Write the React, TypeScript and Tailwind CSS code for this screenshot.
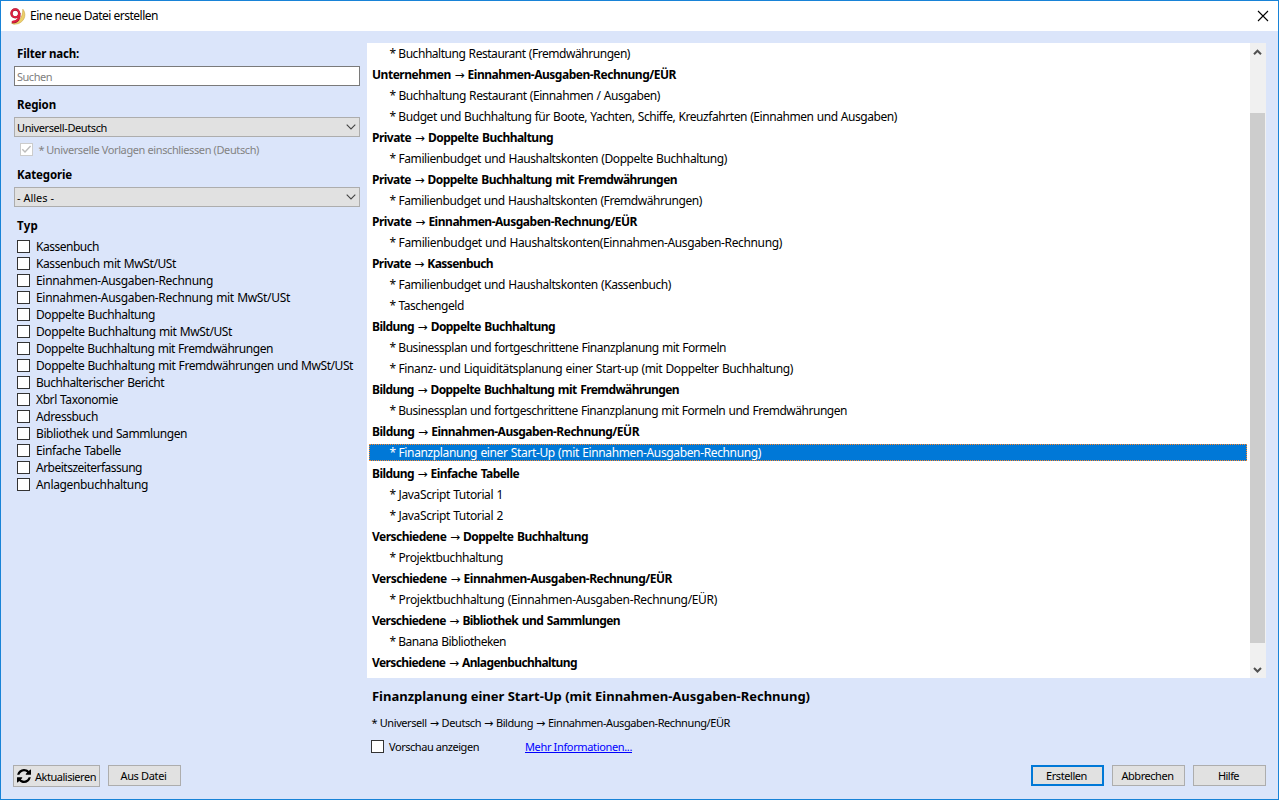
import React from "react";

type Row = { text: string; width: number; kind: "group" | "item" | "selected" };

const rows: Row[] = [
  { kind: "item", text: "* Buchhaltung Restaurant (Fremdwährungen)", width: 240 },
  { kind: "group", text: "Unternehmen → Einnahmen-Ausgaben-Rechnung/EÜR", width: 304 },
  { kind: "item", text: "* Buchhaltung Restaurant (Einnahmen / Ausgaben)", width: 270 },
  { kind: "item", text: "* Budget und Buchhaltung für Boote, Yachten, Schiffe, Kreuzfahrten (Einnahmen und Ausgaben)", width: 507 },
  { kind: "group", text: "Private → Doppelte Buchhaltung", width: 181 },
  { kind: "item", text: "* Familienbudget und Haushaltskonten (Doppelte Buchhaltung)", width: 337 },
  { kind: "group", text: "Private → Doppelte Buchhaltung mit Fremdwährungen", width: 305 },
  { kind: "item", text: "* Familienbudget und Haushaltskonten (Fremdwährungen)", width: 312 },
  { kind: "group", text: "Private → Einnahmen-Ausgaben-Rechnung/EÜR", width: 265 },
  { kind: "item", text: "* Familienbudget und Haushaltskonten(Einnahmen-Ausgaben-Rechnung)", width: 392 },
  { kind: "group", text: "Private → Kassenbuch", width: 121 },
  { kind: "item", text: "* Familienbudget und Haushaltskonten (Kassenbuch)", width: 281 },
  { kind: "item", text: "* Taschengeld", width: 74 },
  { kind: "group", text: "Bildung → Doppelte Buchhaltung", width: 183 },
  { kind: "item", text: "* Businessplan und fortgeschrittene Finanzplanung mit Formeln", width: 336 },
  { kind: "item", text: "* Finanz- und Liquiditätsplanung einer Start-up (mit Doppelter Buchhaltung)", width: 403 },
  { kind: "group", text: "Bildung → Doppelte Buchhaltung mit Fremdwährungen", width: 307 },
  { kind: "item", text: "* Businessplan und fortgeschrittene Finanzplanung mit Formeln und Fremdwährungen", width: 457 },
  { kind: "group", text: "Bildung → Einnahmen-Ausgaben-Rechnung/EÜR", width: 267 },
  { kind: "selected", text: "* Finanzplanung einer Start-Up (mit Einnahmen-Ausgaben-Rechnung)", width: 371 },
  { kind: "group", text: "Bildung → Einfache Tabelle", width: 147 },
  { kind: "item", text: "* JavaScript Tutorial 1", width: 113 },
  { kind: "item", text: "* JavaScript Tutorial 2", width: 113 },
  { kind: "group", text: "Verschiedene → Doppelte Buchhaltung", width: 216 },
  { kind: "item", text: "* Projektbuchhaltung", width: 113 },
  { kind: "group", text: "Verschiedene → Einnahmen-Ausgaben-Rechnung/EÜR", width: 300 },
  { kind: "item", text: "* Projektbuchhaltung (Einnahmen-Ausgaben-Rechnung/EÜR)", width: 327 },
  { kind: "group", text: "Verschiedene → Bibliothek und Sammlungen", width: 248 },
  { kind: "item", text: "* Banana Bibliotheken", width: 116 },
  { kind: "group", text: "Verschiedene → Anlagenbuchhaltung", width: 205 },
];

const types: [string, number][] = [
  ["Kassenbuch", 63],
  ["Kassenbuch mit MwSt/USt", 140],
  ["Einnahmen-Ausgaben-Rechnung", 177],
  ["Einnahmen-Ausgaben-Rechnung mit MwSt/USt", 254],
  ["Doppelte Buchhaltung", 119],
  ["Doppelte Buchhaltung mit MwSt/USt", 196],
  ["Doppelte Buchhaltung mit Fremdwährungen", 237],
  ["Doppelte Buchhaltung mit Fremdwährungen und MwSt/USt", 317],
  ["Buchhalterischer Bericht", 128],
  ["Xbrl Taxonomie", 82],
  ["Adressbuch", 62],
  ["Bibliothek und Sammlungen", 151],
  ["Einfache Tabelle", 85],
  ["Arbeitszeiterfassung", 106],
  ["Anlagenbuchhaltung", 112],
];

/* Tracks a single line of text so that it spans the given width. */
function Fit({ text, width, className = "" }: { text: string; width: number; className?: string }) {
  const ref = React.useRef<HTMLSpanElement>(null);
  const [spacing, setSpacing] = React.useState(0);
  React.useLayoutEffect(() => {
    const natural = ref.current!.getBoundingClientRect().width;
    setSpacing((width - natural) / text.length);
  }, [text, width]);
  return (
    <span ref={ref} className={`inline-block whitespace-pre ${className}`} style={{ letterSpacing: `${spacing}px` }}>
      {text.split(/(→|^\*)/).map((part, i) =>
        part === "→" ? (
          <span key={i} className="font-['DejaVu_Sans',sans-serif] font-normal leading-none">
            →
          </span>
        ) : part === "*" ? (
          <span key={i} className="-ml-[0.5px] -mr-[0.5px]">
            *
          </span>
        ) : (
          part
        ),
      )}
    </span>
  );
}

function Box() {
  return <span className="box-border h-[13px] w-[13px] shrink-0 border border-[#333] bg-white" />;
}

function Combo({ text, width }: { text: string; width: number }) {
  return (
    <div className="flex h-5 w-[346px] items-center justify-between border border-[#adadad] bg-[#e1e1e1] pl-[2px] pr-[3px]">
      <Fit text={text} width={width} className="pt-[2px] text-[11px] leading-[18px]" />
      <svg width="10" height="6" viewBox="0 0 10 6" fill="none" stroke="#444" strokeWidth="1.1">
        <path d="M0.7 0.7 5 5 9.3 0.7" />
      </svg>
    </div>
  );
}

function Button({ text, width, primary }: { text: string; width: number; primary?: boolean }) {
  return (
    <button
      className={`flex h-[21px] w-[73px] items-center justify-center bg-[#e1e1e1] pr-[2px] text-[11px] ${
        primary ? "border-2 border-[#0078d7]" : "border border-[#adadad]"
      }`}
    >
      <Fit text={text} width={width} className="pt-px" />
    </button>
  );
}

export default function App() {
  return (
    <div className="flex h-[800px] w-[1279px] flex-col border border-[#1883d7] bg-[#dbe5fa] font-['Noto_Sans','Open_Sans',sans-serif] text-[12px] text-black">
      <header className="flex h-[30px] shrink-0 items-center bg-white pl-2 pr-[9px]">
        <svg width="17" height="17" viewBox="0 0 17 17" fill="none" className="mr-1">
          <path d="M13.8 1.2C17.2 5 16.8 12.500 9.500 15.600L5 16.300 2.600 15.200C9.500 15 14 9.500 13.800 1.200Z" fill="#edd06a" stroke="#c9a240" strokeWidth=".6" />
          <ellipse cx="6.3" cy="5.4" rx="3.8" ry="3.9" fill="#fff" stroke="#8d1230" strokeWidth="2.3" />
          <path d="M10.300 5C11 10.500 9 14.300 2.800 14.200" stroke="#8d1230" strokeWidth="2.3" />
          <ellipse cx="6.3" cy="5.300" rx="3.900" ry="3.900" stroke="#e01f3f" strokeWidth="1.8" />
          <path d="M10.400 5C11 10.200 8.800 13.700 3 13.900" stroke="#e01f3f" strokeWidth="1.8" />
        </svg>
        <Fit text="Eine neue Datei erstellen" width={128} className="leading-[30px]" />
        <svg className="ml-auto" width="12" height="12" viewBox="0 0 12 12" stroke="#000" strokeWidth="1.1">
          <path d="m1 1 10 10M11 1 1 11" />
        </svg>
      </header>
      <div className="flex h-[647px] shrink-0">
        <aside className="flex w-[366px] shrink-0 flex-col pl-[13px] pt-[15px]">
          <Fit text="Filter nach:" width={62} className="ml-[3px] h-4 self-start text-[11.5px] font-bold leading-4" />
          <div className="mt-1 flex h-5 w-[346px] items-center border border-[#7a7a7a] bg-white pl-[2px] text-[11px] text-[#808080]">
            <Fit text="Suchen" width={35} className="pt-[2px]" />
          </div>
          <Fit text="Region" width={39} className="ml-[3px] mt-[11px] h-4 self-start text-[11.5px] font-bold leading-4" />
          <div className="mt-1">
            <Combo text="Universell-Deutsch" width={90} />
          </div>
          <div className="ml-[6px] mt-[6px] flex h-[13px] items-center text-[11px] text-[#838383]">
            <span className="mr-[6px] flex h-[13px] w-[13px] items-center justify-center border border-[#ccc] bg-white">
              <svg width="11" height="11" viewBox="0 0 11 11" fill="none" stroke="#bcbcbc" strokeWidth="1.4">
                <path d="m1.3 5.3 2.7 2.8 5.6-6" />
              </svg>
            </span>
            <Fit text="* Universelle Vorlagen einschliessen (Deutsch)" width={220} className="pt-[2px]" />
          </div>
          <Fit text="Kategorie" width={55} className="ml-[3px] mt-[11px] h-4 self-start text-[11.5px] font-bold leading-4" />
          <div className="mt-1">
            <Combo text="- Alles -" width={37} />
          </div>
          <Fit text="Typ" width={21} className="ml-[3px] mt-[11px] h-4 self-start text-[11.5px] font-bold leading-4" />
          <div className="ml-[3px] mt-1 flex flex-col">
            {types.map(([label, width]) => (
              <div key={label} className="flex h-[17px] items-center gap-[6px]">
                <Box />
                <Fit text={label} width={width} className="leading-[17px] [word-spacing:0.5px]" />
              </div>
            ))}
          </div>
        </aside>
        <main className="mt-3 flex h-[635px] w-[899px] bg-white">
          <div className="flex w-[883px] flex-col pl-[2px]">
            {rows.map((row) => (
              <div
                key={row.text}
                className={
                  row.kind === "group"
                    ? "flex h-[21px] items-center pl-[3px] font-bold [word-spacing:1px]"
                    : row.kind === "item"
                      ? "flex h-[21px] items-center pl-[21px] [word-spacing:0.5px]"
                      : "my-[2px] mr-[3px] flex h-[17px] items-center border border-dotted border-[#ff8728] bg-[#0078d7] pl-[20px] text-white [word-spacing:0.5px]"
                }
              >
                <Fit text={row.text} width={row.width} className="leading-[17px]" />
              </div>
            ))}
          </div>
          <div className="flex w-4 flex-col items-center bg-[#f0f0f0] pr-px">
            <svg width="15" height="17" viewBox="0 0 15 17" fill="none" stroke="#505050" strokeWidth="2">
              <path d="M4 11.2 7.5 7.7 11 11.2" />
            </svg>
            <div className="mt-[53px] h-[530px] w-[15px] bg-[#cdcdcd]" />
            <svg className="mt-auto" width="15" height="17" viewBox="0 0 15 17" fill="none" stroke="#505050" strokeWidth="2">
              <path d="M4 7 7.5 10.5 11 7" />
            </svg>
          </div>
        </main>
      </div>
      <section className="ml-[370px] flex flex-col">
        <Fit text="Finanzplanung einer Start-Up (mit Einnahmen-Ausgaben-Rechnung)" width={438} className="ml-px mt-[9px] h-[18px] self-start text-[13px] font-bold leading-[18px]" />
        <Fit text="* Universell → Deutsch → Bildung → Einnahmen-Ausgaben-Rechnung/EÜR" width={358} className="ml-px mt-[10px] h-4 self-start text-[11px] leading-4 [word-spacing:0.6px]" />
        <div className="mt-[7px] flex h-4 items-center text-[11px]">
          <Box />
          <Fit text="Vorschau anzeigen" width={90} className="ml-[5px] pt-[2px] leading-4" />
          <Fit text="Mehr Informationen..." width={107} className="ml-[46px] pt-[2px] leading-4 text-[#0000ff] underline" />
        </div>
      </section>
      <footer className="mt-[11px] flex h-[23px] pl-3">
        <button className="flex h-[22px] w-[87px] items-center gap-[4px] border border-[#adadad] bg-[#e1e1e1] pl-[3px] text-[11px]">
          <svg width="14" height="14" viewBox="0 0 1536 1536" fill="#000" className="shrink-0">
            <path d="M1511 928q0 5-1 7-64 268-268 434.500T764 1536q-146 0-282.500-55T238 1324l-129 129q-19 19-45 19t-45-19-19-45V960q0-26 19-45t45-19h448q26 0 45 19t19 45-19 45l-137 137q71 66 161 102t187 36q134 0 250-65t186-179q11-17 53-117 8-23 30-23h192q13 0 22.500 9.500t9.500 22.500zm25-800v448q0 26-19 45t-45 19h-448q-26 0-45-19t-19-45 19-45l138-138Q969 256 768 256q-134 0-250 65T332 500q-11 17-53 117-8 23-30 23H50q-13 0-22.500-9.500T18 608v-7q65-268 270-434.500T768 0q146 0 284 55.500T1297 212l130-129q19-19 45-19t45 19 19 45z" />
          </svg>
          <Fit text="Aktualisieren" width={61} className="pt-[2px]" />
        </button>
        <div className="ml-2">
          <Button text="Aus Datei" width={46} />
        </div>
        <div className="ml-auto mr-3 flex gap-2">
          <Button text="Erstellen" width={41} primary />
          <Button text="Abbrechen" width={52} />
          <Button text="Hilfe" width={21} />
        </div>
      </footer>
    </div>
  );
}
